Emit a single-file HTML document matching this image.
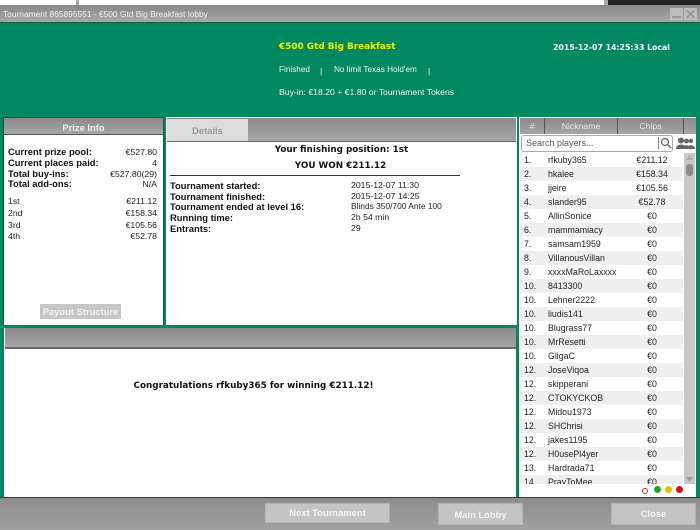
<!DOCTYPE html>
<html><head><meta charset="utf-8">
<style>
html,body{margin:0;padding:0;width:700px;height:530px;overflow:hidden;background:#008860}
body{position:relative;font-family:"Liberation Sans",sans-serif;font-size:9px;color:#111}
div{position:absolute;box-sizing:border-box}
.t{white-space:nowrap;line-height:12px;height:12px}
.b{font-weight:bold;font-size:9.4px}
.v{font-family:"DejaVu Sans",sans-serif;font-weight:bold;font-size:8.8px}
.r{text-align:right}
.c{text-align:center}
.s{font-family:"Liberation Sans",sans-serif;font-size:8.7px;color:#222}
.hd{background:linear-gradient(#8a8a8a,#a6a6a6);}
.w{color:#f0f5f2}
.row{left:0;width:163px;height:14px;line-height:14px;font-family:"Liberation Sans",sans-serif;font-size:8.8px;color:#222}
.row span{position:absolute;top:0;white-space:nowrap}
.n{left:4px}.m{left:28px}.p{left:104px;width:56px;text-align:center}
.alt{background:#efefef}
.btn{background:#c4c4c4;color:#f4f4f4;font-weight:bold;font-size:9.400px;text-align:center;border:1px solid #b4b4b4}
</style></head><body>
<!-- top strip -->
<div style="left:0;top:0;width:700px;height:5px;background:#fff"></div>
<div style="left:76px;top:0;width:3px;height:5px;background:#aaa"></div>
<div style="left:604px;top:0;width:4px;height:5px;background:#aaa"></div>
<div style="left:608px;top:0;width:92px;height:5px;background:#222"></div>
<!-- title bar -->
<div style="left:0;top:5px;width:700px;height:18px;background:linear-gradient(#888,#a8a8a8);border-bottom:1px solid #0a5c42"></div>
<div class="t s" style="left:3px;top:8px;color:#f0f0f0;font-size:8.4px">Tournament 865895551 - €500 Gtd Big Breakfast lobby</div>
<div style="left:670px;top:8px;width:13px;height:12px;background:#bcbcbc"></div>
<div style="left:672px;top:16px;width:9px;height:2px;background:#969696"></div>
<div style="left:684px;top:8px;width:13px;height:12px;background:#bcbcbc"></div>
<svg style="position:absolute;left:684px;top:8px" width="13" height="12"><path d="M3 2.500L10 9.500M10 2.500L3 9.500" stroke="#969696" stroke-width="1.800"/></svg>
<!-- header -->
<div class="t v" style="left:279px;top:41px;color:#f2f200;font-size:8.9px">€500 Gtd Big Breakfast</div>
<div class="t s w" style="left:279px;top:64px;font-size:8.2px">Finished</div>
<div class="t s w" style="left:320px;top:65px">|</div>
<div class="t s w" style="left:334px;top:64px;font-size:8.2px">No limit Texas Hold'em</div>
<div class="t s w" style="left:428px;top:65px">|</div>
<div class="t s w" style="left:279px;top:86px;font-size:8.66px">Buy-in: €18.20 + €1.80 or Tournament Tokens</div>
<div class="t v" style="left:553px;top:42px;color:#fff;font-size:7.8px">2015-12-07 14:25:33 Local</div>

<!-- prize panel -->
<div style="left:3px;top:117px;width:161px;height:208px;background:#fff;border:1px solid #0a5c42;border-bottom:0"></div>
<div class="hd t b c" style="left:4px;top:118px;width:159px;height:17px;line-height:19px;color:#eee;border-bottom:1px solid #555">Prize Info</div>
<div class="t b" style="left:8px;top:146px">Current prize pool:</div><div class="t s r" style="right:543px;top:146px">€527.80</div>
<div class="t b" style="left:8px;top:157px">Current places paid:</div><div class="t s r" style="right:543px;top:157px">4</div>
<div class="t b" style="left:8px;top:168px">Total buy-ins:</div><div class="t s r" style="right:543px;top:168px">€527.80(29)</div>
<div class="t b" style="left:8px;top:178px">Total add-ons:</div><div class="t s r" style="right:543px;top:178px">N/A</div>
<div class="t s" style="left:8px;top:195px">1st</div><div class="t s r" style="right:543px;top:195px">€211.12</div>
<div class="t s" style="left:8px;top:207px">2nd</div><div class="t s r" style="right:543px;top:207px">€158.34</div>
<div class="t s" style="left:8px;top:219px">3rd</div><div class="t s r" style="right:543px;top:219px">€105.56</div>
<div class="t s" style="left:8px;top:230px">4th</div><div class="t s r" style="right:543px;top:230px">€52.78</div>
<div class="t b c" style="left:40px;top:304px;width:81px;height:15px;line-height:16px;background:#c6c6c6;color:#f2f2f2">Payout Structure</div>

<!-- details panel -->
<div style="left:166px;top:117px;width:351px;height:208px;background:#fff"></div>
<div class="hd" style="left:167px;top:118px;width:349px;height:24px;border-bottom:1px solid #666"></div>
<div class="t b c" style="left:167px;top:119px;width:81px;height:22px;line-height:24px;background:#dcdcdc;color:#999">Details</div>
<div class="t v c" style="left:167px;top:144px;width:349px;color:#111">Your finishing position: 1st</div>
<div class="t v c" style="left:196px;top:160px;width:289px;color:#111">YOU WON €211.12</div>
<div style="left:170px;top:175px;width:290px;height:1px;background:#333"></div>
<div class="t b" style="left:170px;top:180px">Tournament started:</div><div class="t s" style="left:351px;top:179px">2015-12-07 11:30</div>
<div class="t b" style="left:170px;top:191px">Tournament finished:</div><div class="t s" style="left:351px;top:190px">2015-12-07 14:25</div>
<div class="t b" style="left:170px;top:201px">Tournament ended at level 16:</div><div class="t s" style="left:351px;top:200px;font-size:8.4px">Blinds 350/700 Ante 100</div>
<div class="t b" style="left:170px;top:212px">Running time:</div><div class="t s" style="left:351px;top:211px">2h 54 min</div>
<div class="t b" style="left:170px;top:223px">Entrants:</div><div class="t s" style="left:351px;top:222px">29</div>

<!-- bottom panel -->
<div style="left:4px;top:328px;width:512px;height:169px;background:#fff"></div>
<div class="hd" style="left:5px;top:328px;width:511px;height:21px;border-bottom:2px solid #666"></div>
<div class="t v c" style="left:0;top:380px;width:507px;color:#111">Congratulations rfkuby365 for winning €211.12!</div>

<!-- right panel -->
<div style="left:519px;top:117px;width:177px;height:380px;background:#fff"></div>
<div class="hd" style="left:520px;top:118px;width:176px;height:16px"></div>
<div class="t s c" style="left:520px;top:120px;width:24px;color:#e8e8e8">#</div>
<div class="t s c" style="left:545px;top:120px;width:72px;color:#e8e8e8">Nickname</div>
<div class="t s c" style="left:618px;top:120px;width:65px;color:#e8e8e8">Chips</div>
<div style="left:544px;top:118px;width:1px;height:16px;background:#555"></div>
<div style="left:617px;top:118px;width:1px;height:16px;background:#555"></div>
<div style="left:683px;top:118px;width:1px;height:16px;background:#555"></div>
<div class="t s" style="left:521px;top:135px;width:152px;height:17px;border:1px solid #aaa;border-radius:3px;background:#fff;line-height:15px;padding-left:4px;color:#555;font-size:9px">Search players...</div>
<div style="left:658px;top:137px;width:1px;height:12px;background:#888"></div>
<svg style="position:absolute;left:660px;top:137px" width="12" height="12"><circle cx="5" cy="5" r="3.500" fill="none" stroke="#666" stroke-width="1.200"/><path d="M7.500 7.500L11 11" stroke="#666" stroke-width="1.400"/></svg>
<svg style="position:absolute;left:676px;top:137px" width="19" height="13"><g fill="#666"><circle cx="15" cy="4" r="2.200"/><path d="M11 12C11 7 19 7 19 12Z"/><circle cx="10.500" cy="4" r="2.500"/><path d="M6.500 12C6.500 7 14.500 7 14.500 12Z"/><circle cx="5" cy="3.500" r="3"/><path d="M0 12C0 6 10 6 10 12Z"/></g></svg>

<div style="left:520px;top:153px;width:163px;height:331px;overflow:hidden;background:#fff">
<div class="row" style="top:0"><span class="n">1.</span><span class="m">rfkuby365</span><span class="p">€211.12</span></div>
<div class="row alt" style="top:14px"><span class="n">2.</span><span class="m">hkalee</span><span class="p">€158.34</span></div>
<div class="row" style="top:28px"><span class="n">3.</span><span class="m">jjeire</span><span class="p">€105.56</span></div>
<div class="row alt" style="top:42px"><span class="n">4.</span><span class="m">slander95</span><span class="p">€52.78</span></div>
<div class="row" style="top:56px"><span class="n">5.</span><span class="m">AllinSonice</span><span class="p">€0</span></div>
<div class="row alt" style="top:70px"><span class="n">6.</span><span class="m">mammamiacy</span><span class="p">€0</span></div>
<div class="row" style="top:84px"><span class="n">7.</span><span class="m">samsam1959</span><span class="p">€0</span></div>
<div class="row alt" style="top:98px"><span class="n">8.</span><span class="m">VillanousVillan</span><span class="p">€0</span></div>
<div class="row" style="top:112px"><span class="n">9.</span><span class="m">xxxxMaRoLaxxxx</span><span class="p">€0</span></div>
<div class="row alt" style="top:126px"><span class="n">10.</span><span class="m">8413300</span><span class="p">€0</span></div>
<div class="row" style="top:140px"><span class="n">10.</span><span class="m">Lehner2222</span><span class="p">€0</span></div>
<div class="row alt" style="top:154px"><span class="n">10.</span><span class="m">liudis141</span><span class="p">€0</span></div>
<div class="row" style="top:168px"><span class="n">10.</span><span class="m">Blugrass77</span><span class="p">€0</span></div>
<div class="row alt" style="top:182px"><span class="n">10.</span><span class="m">MrResetti</span><span class="p">€0</span></div>
<div class="row" style="top:196px"><span class="n">10.</span><span class="m">GligaC</span><span class="p">€0</span></div>
<div class="row alt" style="top:210px"><span class="n">12.</span><span class="m">JoseViqoa</span><span class="p">€0</span></div>
<div class="row" style="top:224px"><span class="n">12.</span><span class="m">skipperani</span><span class="p">€0</span></div>
<div class="row alt" style="top:238px"><span class="n">12.</span><span class="m">CTOKYCKOB</span><span class="p">€0</span></div>
<div class="row" style="top:252px"><span class="n">12.</span><span class="m">Midou1973</span><span class="p">€0</span></div>
<div class="row alt" style="top:266px"><span class="n">12.</span><span class="m">SHChrisi</span><span class="p">€0</span></div>
<div class="row" style="top:280px"><span class="n">12.</span><span class="m">jakes1195</span><span class="p">€0</span></div>
<div class="row alt" style="top:294px"><span class="n">12.</span><span class="m">H0usePl4yer</span><span class="p">€0</span></div>
<div class="row" style="top:308px"><span class="n">13.</span><span class="m">Hardrada71</span><span class="p">€0</span></div>
<div class="row alt" style="top:322px"><span class="n">14.</span><span class="m">PrayToMee</span><span class="p">€0</span></div>
</div>
<!-- scrollbar -->
<div style="left:684px;top:153px;width:11px;height:331px;background:#c8c8c8"></div>
<svg style="position:absolute;left:684px;top:153px" width="11" height="10"><path d="M5.500 2L9 7H2Z" fill="#aaa"/></svg>
<div style="left:686px;top:164px;width:7px;height:12px;background:#8c8c8c;border-radius:3px"></div>
<svg style="position:absolute;left:684px;top:474px" width="11" height="10"><path d="M5.500 8L9 3H2Z" fill="#999"/></svg>
<!-- dots -->
<div style="left:642px;top:488px;width:6px;height:6px;border-radius:50%;border:1.500px solid #d22;background:#fff"></div>
<div style="left:654px;top:486px;width:7px;height:7px;border-radius:50%;background:#1fa81f"></div>
<div style="left:665px;top:486px;width:7px;height:7px;border-radius:50%;background:#e0c400"></div>
<div style="left:676px;top:486px;width:7px;height:7px;border-radius:50%;background:#d80f0f"></div>

<!-- footer -->
<div style="left:0;top:497px;width:700px;height:33px;background:linear-gradient(#8c8c8c,#a0a0a0);border-top:1px solid #0a4c36"></div>
<div class="btn" style="left:265px;top:503px;width:125px;height:20px;line-height:18px">Next Tournament</div>
<div class="btn" style="left:438px;top:503px;width:85px;height:22px;line-height:21px">Main Lobby</div>
<div class="btn" style="left:611px;top:503px;width:85px;height:22px;line-height:20px">Close</div>
</body></html>
